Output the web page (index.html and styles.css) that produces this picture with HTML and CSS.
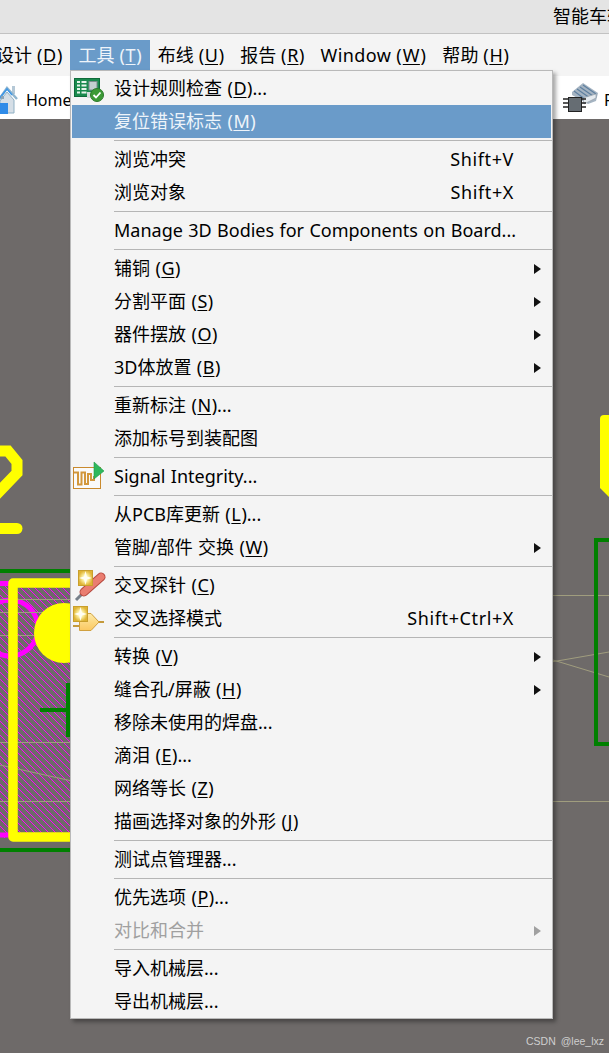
FILE: index.html
```html
<!DOCTYPE html>
<html lang="zh">
<head>
<meta charset="utf-8">
<title>智能车</title>
<link rel="stylesheet" href="styles.css">
</head>
<body>
<header class="titlebar"><span class="title">智能车辅助</span></header>
<nav class="menubar">
  <span class="top first">设计 (<u>D</u>)</span>
  <span class="top active">工具 (<u>T</u>)</span>
  <span class="top">布线 (<u>U</u>)</span>
  <span class="top">报告 (<u>R</u>)</span>
  <span class="top wide">Window (<u>W</u>)</span>
  <span class="top">帮助 (<u>H</u>)</span>
</nav>
<div class="toolbar">
  <div class="tool home">
    <svg class="home-icon" viewBox="0 78 26 40" width="26" height="40">
      <path d="M0 99 L7 90 L14 98 V111 H0 Z" fill="#d5dee6" stroke="#8fb0c4"/>
      <rect x="12" y="84" width="3" height="8" fill="#b5c8d6"/>
      <path d="M-2 99 L7 86 L17 97" fill="none" stroke="#8fb5cf" stroke-width="2.5"/>
      <path d="M-2 98 L7 87 L12 93" fill="none" stroke="#3f97e6" stroke-width="1.5"/>
      <rect x="0" y="101" width="8" height="11" fill="#2f8be8"/>
      <rect x="1" y="94" width="3" height="3" fill="#8ca4b6"/>
    </svg>
    <span class="tool-text">Home</span>
  </div>
  <div class="tool">
    <svg class="chip-icon" viewBox="562 84 38 34" width="38" height="34">
      <path d="M572 95 L583 86 L598 96 L596 104 L588 107 L572 98 Z" fill="#a5b4c2"/>
      <path d="M574 94 L586 103 M577 92 L590 101 M580 90 L593 99 M583 88 L596 97" stroke="#5e7f9f" stroke-width="1.2"/>
      <path d="M583 101 L596 97 V101 L584 107 Z" fill="#e6ebef" stroke="#8e9aa5" stroke-width=".6"/>
      <path d="M563 102 H569 M563 106 H569 M563 110 H569 M581 102 H586 M581 106 H586 M581 110 H586" stroke="#222" stroke-width="1.6"/>
      <rect x="568.5" y="100.5" width="13" height="14" fill="#666d73" stroke="#222"/>
    </svg>
    <span class="tool-text">PCB</span>
  </div>
</div>
<main class="canvas">
  <svg class="board" viewBox="0 119 609 934" width="609" height="934">
    <defs>
      <pattern id="hatch" patternUnits="userSpaceOnUse" width="7" height="7">
        <path d="M-2 -2 L9 9 M-2 5 L2 9 M5 -2 L9 2" stroke="#ff00ff" stroke-width="1" shape-rendering="crispEdges"/>
      </pattern>
    </defs>
    <rect x="0" y="582" width="72" height="256" fill="url(#hatch)"/>
    <path d="M0 583.5 H10 M0 835 H10" stroke="#ff00ff" stroke-width="5"/>
    <circle cx="10" cy="628" r="28" fill="none" stroke="#ff00ff" stroke-width="5"/>
    <g stroke="#a09d7e" stroke-width="1" fill="none">
      <path d="M0 599.5 H72 M0 612.5 H72 M0 635.5 H72 M0 742.5 H72 M0 801.5 H72 M0 765 L72 781"/>
      <path d="M553 595.5 H609 M553 801.5 H609 M553 661.7 L609 652 M553 660 L609 677"/>
    </g>
    <circle cx="64" cy="633" r="30" fill="#ffff00"/>
    <path d="M0 571 H72 M0 850 H72" stroke="#008000" stroke-width="4"/>
    <path d="M40 710 H72 M68 683 V737" stroke="#008000" stroke-width="4"/>
    <path d="M613 540 H596 V744 H613" fill="none" stroke="#008000" stroke-width="4"/>
    <path d="M72 583 H13 V837 H72" fill="none" stroke="#ffff00" stroke-width="9.5" stroke-linejoin="round"/>
    <path d="M-6 451 H8 L17 462 V473 L-4 495" fill="none" stroke="#ffff00" stroke-width="11"/>
    <path d="M-6 528.5 H17" stroke="#ffff00" stroke-width="11" stroke-linecap="round"/>
    <path d="M613 415 H604 Q600 415 600 419 V488 L609 497 H613 Z" fill="#ffff00"/>
  </svg>
  <span class="mark">CSDN @lee_lxz</span>
</main>

<div class="menu">
  <div class="item">
    <svg class="ico" viewBox="72 72 42 33" width="42" height="33">
      <rect x="74.5" y="78.5" width="25" height="18" fill="#1a8a4e" stroke="#0f6b3a"/>
      <path d="M77 82 H80 M81.5 82 H86.5 M77 85.5 H80 M81.5 85.5 H86.5 M77 89 H80 M81.5 89 H86.5 M77 92.5 H80 M81.5 92.5 H86.5" stroke="#e6f5ea" stroke-width="1.8"/>
      <rect x="89" y="81.5" width="8" height="8.5" fill="#c4cfd0" stroke="#7d8c8c"/>
      <rect x="87" y="92" width="4" height="6" fill="#d5dcdc"/>
      <circle cx="97" cy="95" r="6.5" fill="#3c9a36" stroke="#2c7a2a"/>
      <path d="M93.5 95 L96 97.5 L100.5 92.5" fill="none" stroke="#fff" stroke-width="1.8"/>
    </svg>
    <span class="label">设计规则检查 (<u>D</u>)...</span>
  </div>
  <div class="item hot"><span class="label">复位错误标志 (<u>M</u>)</span></div>
  <div class="sep"></div>
  <div class="item"><span class="label">浏览冲突</span><span class="key">Shift+V</span></div>
  <div class="item"><span class="label">浏览对象</span><span class="key">Shift+X</span></div>
  <div class="sep"></div>
  <div class="item"><span class="label">Manage 3D Bodies for Components on Board...</span></div>
  <div class="sep"></div>
  <div class="item"><span class="label">铺铜 (<u>G</u>)</span><i class="arrow"></i></div>
  <div class="item"><span class="label">分割平面 (<u>S</u>)</span><i class="arrow"></i></div>
  <div class="item"><span class="label">器件摆放 (<u>O</u>)</span><i class="arrow"></i></div>
  <div class="item"><span class="label">3D体放置 (<u>B</u>)</span><i class="arrow"></i></div>
  <div class="sep"></div>
  <div class="item"><span class="label">重新标注 (<u>N</u>)...</span></div>
  <div class="item"><span class="label">添加标号到装配图</span></div>
  <div class="sep"></div>
  <div class="item">
    <svg class="ico" viewBox="72 460 42 33" width="42" height="33">
      <rect x="73.5" y="467.5" width="27" height="21" fill="#fafafa" stroke="#c98a2e"/>
      <path d="M74 472.5 H78 V484.5 H81.5 V472.5 H85 V484 H88 V474 H91 V480 H94 V476" fill="none" stroke="#d2973c" stroke-width="2"/>
      <path d="M94 462 L104 471 L94 479 Z" fill="#2eb85c" stroke="#1f9a48" stroke-width=".6"/>
    </svg>
    <span class="label">Signal Integrity...</span>
  </div>
  <div class="sep"></div>
  <div class="item"><span class="label">从PCB库更新 (<u>L</u>)...</span></div>
  <div class="item"><span class="label">管脚/部件 交换 (<u>W</u>)</span><i class="arrow"></i></div>
  <div class="sep"></div>
  <div class="item">
    <svg class="ico" viewBox="72 569 42 33" width="42" height="33">
      <defs>
        <radialGradient id="glow-a"><stop offset="0" stop-color="#fffef2"/><stop offset=".45" stop-color="#fbeea0"/><stop offset="1" stop-color="#dfb434"/></radialGradient>
      </defs>
      <path d="M83 593 L76 600" stroke="#77808a" stroke-width="3"/>
      <path d="M84 592 L101 577" stroke="#b5483e" stroke-width="9" stroke-linecap="round"/>
      <path d="M84 592 L101 577" stroke="#ea7d70" stroke-width="7" stroke-linecap="round"/>
      <rect x="78.5" y="570.5" width="14" height="15" fill="url(#glow-a)" stroke="#c99f2c"/>
      <path d="M85.5 571 L87 576.5 L92 578 L87 579.5 L85.5 585 L84 579.5 L79 578 L84 576.5 Z" fill="#fffef2"/>
    </svg>
    <span class="label">交叉探针 (<u>C</u>)</span>
  </div>
  <div class="item">
    <svg class="ico" viewBox="72 602 42 33" width="42" height="33">
      <defs>
        <linearGradient id="gate-fill" x1="0" y1="0" x2="0" y2="1"><stop offset="0" stop-color="#fdeaa8"/><stop offset="1" stop-color="#fbc860"/></linearGradient>
        <radialGradient id="glow-b"><stop offset="0" stop-color="#fffef2"/><stop offset=".45" stop-color="#fbeea0"/><stop offset="1" stop-color="#dfb434"/></radialGradient>
      </defs>
      <path d="M73 626 H80 M98 622 H104" stroke="#c49a3c" stroke-width="2"/>
      <path d="M79.5 613.5 H91 L99 622 L91 630.5 H79.5 Z" fill="url(#gate-fill)" stroke="#d0a040"/>
      <rect x="73.5" y="606.5" width="14" height="15" fill="url(#glow-b)" stroke="#c99f2c"/>
      <path d="M80.5 607 L82 612.5 L87 614 L82 615.5 L80.5 621 L79 615.5 L74 614 L79 612.5 Z" fill="#fffef2"/>
    </svg>
    <span class="label">交叉选择模式</span><span class="key">Shift+Ctrl+X</span>
  </div>
  <div class="sep"></div>
  <div class="item"><span class="label">转换 (<u>V</u>)</span><i class="arrow"></i></div>
  <div class="item"><span class="label">缝合孔/屏蔽 (<u>H</u>)</span><i class="arrow"></i></div>
  <div class="item"><span class="label">移除未使用的焊盘...</span></div>
  <div class="item"><span class="label">滴泪 (<u>E</u>)...</span></div>
  <div class="item"><span class="label">网络等长 (<u>Z</u>)</span></div>
  <div class="item"><span class="label">描画选择对象的外形 (<u>J</u>)</span></div>
  <div class="sep"></div>
  <div class="item"><span class="label">测试点管理器...</span></div>
  <div class="sep"></div>
  <div class="item"><span class="label">优先选项 (<u>P</u>)...</span></div>
  <div class="item off"><span class="label">对比和合并</span><i class="arrow"></i></div>
  <div class="sep"></div>
  <div class="item"><span class="label">导入机械层...</span></div>
  <div class="item"><span class="label">导出机械层...</span></div>
</div>
</body>
</html>
```
FILE: styles.css
```css
* { box-sizing: border-box; }
html, body { margin: 0; height: 100%; }
body {
  display: flex;
  flex-direction: column;
  height: 1053px;
  overflow: hidden;
  position: relative;
  background: #6e6a69;
  font-family: "Noto Sans", "Noto Sans CJK SC", sans-serif;
  font-size: 18px;
  color: #000;
}
u {
  padding: 0 .6px;
  text-underline-offset: 2px;
  text-decoration-thickness: 1px;
}

.titlebar {
  flex: none;
  height: 34px;
  padding-left: 553px;
  background: #e4e4e4;
  border-bottom: 1px solid #c2c2c2;
  line-height: 33px;
  white-space: nowrap;
  overflow: hidden;
}

.menubar {
  flex: none;
  height: 42px;
  padding-top: 6px;
  display: flex;
  background: #f4f4f4;
  white-space: nowrap;
}
.top {
  height: 30px;
  padding: 0 8px;
  line-height: 30px;
  letter-spacing: .1px;
}
.top.first { margin-left: -12px; }
.top.wide { letter-spacing: .4px; }
.top.active { background: #6a9bc9; color: #eef4fa; }

.toolbar {
  flex: none;
  height: 43px;
  display: flex;
  align-items: center;
  background: #fff;
  overflow: hidden;
  font-size: 16px;
  white-space: nowrap;
}
.tool { flex: none; display: flex; align-items: center; }
.tool.home { width: 562px; }
.tool-text { padding-top: 4px; }
.home-icon { margin-top: 4px; }
.chip-icon { margin-right: 4px; }

.canvas {
  flex: 1;
  position: relative;
  overflow: hidden;
}
.board { display: block; }
.mark {
  position: absolute;
  right: 5px;
  bottom: 5px;
  font-size: 10.5px;
  line-height: 14px;
  word-spacing: 2px;
  color: #cfcfcf;
  font-family: "Liberation Sans", sans-serif;
}

.menu {
  position: absolute;
  left: 70px;
  top: 70px;
  width: 483px;
  height: 949px;
  padding: 1px 1px 0 1px;
  background: #f4f4f4;
  border: 1px solid #b9b9b9;
  box-shadow: 3px 3px 4px rgba(0, 0, 0, .35);
}
.item {
  height: 33px;
  display: grid;
  grid-template-columns: 42px 1fr auto 37px;
  align-items: center;
  line-height: 33px;
  white-space: nowrap;
  word-spacing: .7px;
}
.item .label { grid-column: 2; }
.item .key { grid-column: 3; letter-spacing: .6px; }
.item .arrow { grid-column: 4; }
.ico { grid-column: 1; grid-row: 1; display: block; }
.item.hot { background: #6a9bc9; color: #eef4fa; }
.item.off { color: #a0a0a0; }
.arrow {
  justify-self: end;
  margin-right: 10px;
  width: 0;
  height: 0;
  border-left: 7px solid #111;
  border-top: 5px solid transparent;
  border-bottom: 5px solid transparent;
}
.off .arrow { border-left-color: #a0a0a0; }
.sep {
  height: 5px;
  margin: 0 -1px 0 42px;
  padding-top: 2px;
}
.sep::before {
  content: "";
  display: block;
  height: 1px;
  background: #b5b5b5;
}
```
